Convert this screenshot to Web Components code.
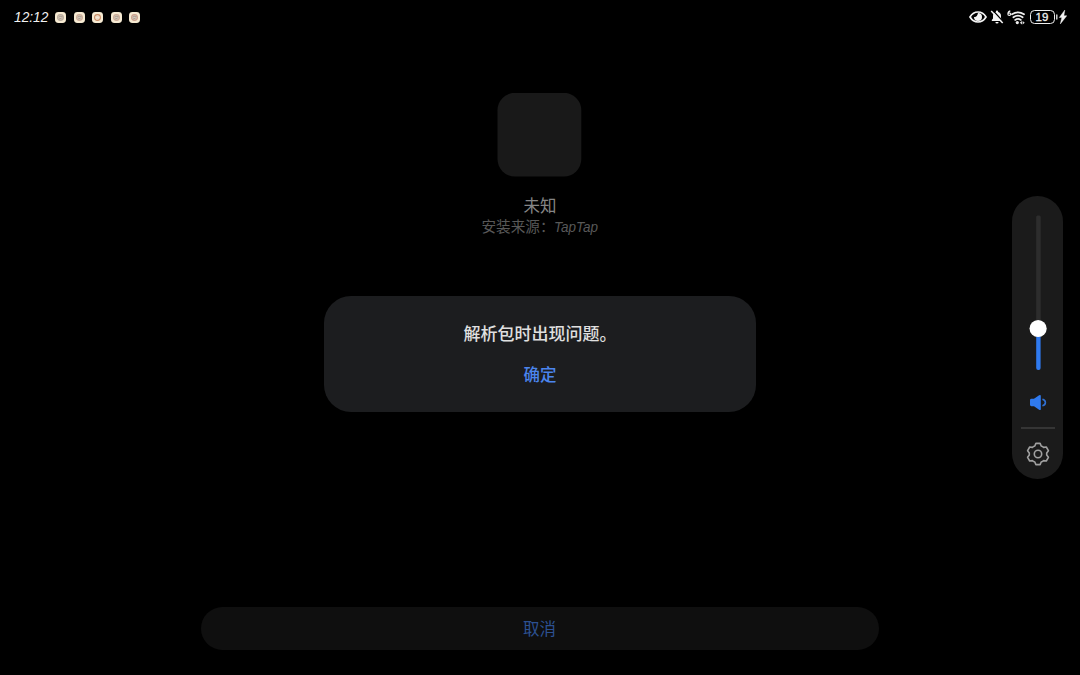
<!DOCTYPE html>
<html lang="zh-CN">
<head>
<meta charset="utf-8">
<title>安装</title>
<style>
html,body{margin:0;height:100%;background:#000;overflow:hidden}
body{font-family:"Liberation Sans","Noto Sans CJK SC",sans-serif}
</style>
</head>
<body>
<installer-screen></installer-screen>
<script>
function define(name, html){
  const t=document.createElement('template');
  t.innerHTML=html;
  customElements.define(name,class extends HTMLElement{
    constructor(){super();this.attachShadow({mode:'open'}).append(t.content.cloneNode(true));}
  });
}

define('notice-icon',`<style>
:host{display:block;width:11px;height:11px}svg{display:block}</style>
<svg width="11" height="11" viewBox="0 0 11 11"><rect width="11" height="11" rx="3.4" fill="#f6ead2"/>
<circle cx="5.5" cy="5.5" r="2.9" fill="var(--fill,#d6c9ba)" stroke="var(--ring,#b8aa9c)" stroke-width="1.1"/>
<path d="M3.6 5.2l1.6-.9 2.4.6M4 7l2.6-.8" fill="none" stroke="var(--mark,#998c80)" stroke-width=".7"/></svg>`);

define('status-bar',`<style>
:host{display:flex;justify-content:space-between;height:34px;box-sizing:border-box;padding:0 13.5px 0 14px;color:#f2f2f2}
.l{display:flex;align-items:center;gap:7.5px}
time{font:italic 14px/34px "Liberation Sans",sans-serif;width:33.5px;white-space:nowrap;display:block}
time span{display:inline-block;transform:scaleX(.98);transform-origin:0 50%}
.r{display:flex;align-items:center}
svg{display:block;flex:none}
.bat{display:flex;align-items:center;justify-content:center;box-sizing:border-box;width:25px;height:14px;border:1.4px solid #eee;border-radius:4.5px;font:11.5px/11px "Liberation Sans",sans-serif;-webkit-text-stroke:.3px #f2f2f2;margin-left:4px}
</style>
<div class="l"><time><span>12:12</span></time>
<notice-icon></notice-icon><notice-icon style="--ring:#ccab97"></notice-icon><notice-icon style="--fill:#f6eadb;--ring:#c98a62;--mark:#e8cdb2"></notice-icon><notice-icon style="--ring:#ccab97"></notice-icon><notice-icon style="--ring:#cb9f8c"></notice-icon></div>
<div class="r">
<svg width="18" height="14" viewBox="0 0 18 14"><path d="M1 7C3 3.600 5.800 2 9 2s6 1.600 8 5c-2 3.400-4.800 5-8 5S3 10.400 1 7z" fill="none" stroke="#f4f4f4" stroke-width="1.700"/><path d="M9 3A4 4 0 1 1 5 7q3 .8 4-4z" fill="#f4f4f4"/></svg>
<svg style="margin-left:3px" width="14" height="14" viewBox="0 0 14 14"><path d="M1.800 11V10l1.200-1.500V6c0-2 1-3.400 2.900-3.900V1.500a1.100 1.100 0 0 1 2.200 0v.6C10 2.600 11 4 11 6v2.500L12.200 10v1z" fill="#f4f4f4"/><path d="M5.400 12h3.200a1.600 1.600 0 0 1-3.200 0z" fill="#f4f4f4"/><path d="M2.700 .3l11 12" stroke="#000" stroke-width="1.400"/><path d="M1.200 1l11.500 12" stroke="#f4f4f4" stroke-width="1.500"/></svg>
<svg style="margin-left:2.500px" width="19" height="15" viewBox="0 0 19 15"><path d="M3.300 .8Q.9 1.500 .9 4q0 1.500 1.300 1.500T3.500 4.200 2.200 3 1 4" fill="none" stroke="#eee" stroke-width="1.200"/><path d="M5 4.300q6-4 12 0M6.400 7.200q4.600-3.200 9.200 0M8.200 9.900q2.800-2 5.600 0" fill="none" stroke="#f0f0f0" stroke-width="1.800" stroke-linecap="round"/><circle cx="10.300" cy="12.600" r="1.600" fill="#eee"/><path d="M12.800 12.700l2.200-1.800v3.600zM17.800 12.700l-2.200-1.800v3.600z" fill="#ddd"/></svg>
<div class="bat">19</div>
<svg style="margin-left:1px" width="11" height="14" viewBox="0 0 11 14"><path d="M.8 5v4" stroke="#ddd" stroke-width="1.400" stroke-linecap="round"/><path d="M8.800 0L3.300 7.500h2.500L4.300 14l6.500-8.300H7.900z" fill="#f4f4f4" stroke="#f4f4f4" stroke-width=".4"/></svg>
</div>`);

define('app-summary',`<style>
:host{display:flex;flex-direction:column;align-items:center;padding-top:59px}
svg{display:block;margin-right:1px}
.name{font-size:16.500px;line-height:24px;margin-top:17px;color:#858585}
.src{font-size:14.600px;line-height:20px;margin-top:-1px;color:#585858;display:flex}
i{display:block;width:44px;white-space:nowrap;font-size:14.500px}
i span{display:inline-block;transform:scaleX(.93);transform-origin:0 50%}
</style><svg width="85" height="84" viewBox="0 0 85 84"><rect x="0.500" y="-.2" width="83.800" height="83.800" rx="17.500" fill="#191919"/></svg><div class="name">未知</div><div class="src">安装来源：<i><span>TapTap</span></i></div>`);

define('pill-button',`<style>
:host{display:flex;align-items:center;justify-content:center;width:678px;height:43px;border-radius:21.500px;background:#0f0f0f;color:#2c5192;font-size:16.500px;line-height:24px}
</style><slot></slot>`);

define('message-dialog',`<style>
:host{position:absolute;left:324px;top:296px;width:432px;height:116px;border-radius:27px;background:#1c1d1f;display:flex;flex-direction:column;align-items:center;box-sizing:border-box;padding-top:27px}
p{margin:0;font-size:17px;line-height:24px;color:#e0e0e0;font-weight:500}
.ok{margin-top:16px;font-size:16.500px;line-height:24px;color:#4b85ed;font-weight:500}
</style><p><slot></slot></p><div class="ok"><slot name="action"></slot></div>`);

define('volume-panel',`<style>
:host{position:absolute;left:1012px;top:196px;width:51px;height:283px;border-radius:25.500px;background:#1b1b1b;display:flex;flex-direction:column;align-items:center;box-sizing:border-box;padding-top:19px}
svg{display:block}
hr{width:34px;height:1.500px;border:0;margin:16px 0 0;background:#353535}
</style>
<svg width="20" height="156" viewBox="0 0 20 156"><rect x="8.200" y="0.500" width="4.500" height="112" rx="1.500" fill="#2d2d2d"/><rect x="8.200" y="112" width="4.400" height="43" rx="2" fill="#2f7aef"/><circle cx="10.100" cy="113.500" r="8.600" fill="#fff"/></svg>
<svg style="margin-top:23px" width="18" height="17" viewBox="0 0 18 17"><path d="M1 6.200q0-1.400 1.400-1.400H5L10.100 1.200q1.700-.9 1.700.9v12.800q0 1.800-1.700.9L5 12.200H2.400Q1 12.200 1 10.800z" fill="#2f7aef"/><path d="M13.400 5.200q3 .7 3 3.300t-3 3.300" fill="none" stroke="#2f70d4" stroke-width="1.600"/></svg>
<hr>
<svg style="margin-top:12px" width="26" height="26" viewBox="-13 -13 26 26" fill="none" stroke="#a0a0a0" stroke-width="1.600" stroke-linejoin="round"><path d="M-2.100-10.600H2.100L3.200-8Q4.800-7.400 5.600-6.600L8.300-7 10.400-3.300 8.700-1.100V1.100L10.400 3.300 8.300 7 5.600 6.600Q4.800 7.400 3.200 8L2.100 10.600H-2.100L-3.200 8Q-4.800 7.400-5.600 6.600L-8.300 7-10.400 3.300-8.700 1.100V-1.100L-10.400-3.300-8.300-7-5.600-6.600Q-4.800-7.400-3.200-8z"/><circle r="3.700"/></svg>`);

define('installer-screen',`<style>
:host{position:relative;display:flex;flex-direction:column;width:1080px;height:675px;background:#000;overflow:hidden}
app-summary{flex:1}
pill-button{align-self:center;margin:0 1px 25px 0}
</style>
<status-bar></status-bar><app-summary></app-summary><pill-button>取消</pill-button>
<message-dialog>解析包时出现问题。<span slot="action">确定</span></message-dialog>
<volume-panel></volume-panel>`);
</script>
</body>
</html>
